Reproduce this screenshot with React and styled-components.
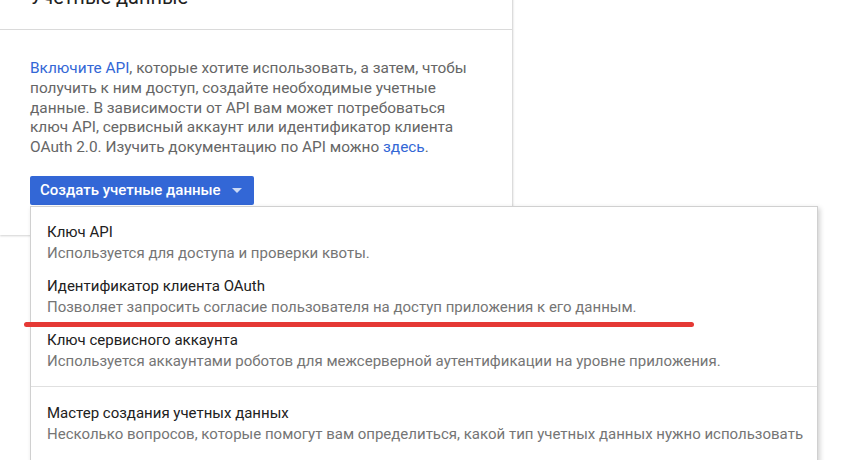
import React from "react";
import styled, { createGlobalStyle } from "styled-components";

const GlobalStyle = createGlobalStyle`
    html, body {
        margin: 0;
        padding: 0;
        background: #fff;
        overflow: hidden;
    }
    body {
        font-family: Roboto, "Liberation Sans", Arial, sans-serif;
        -webkit-font-smoothing: antialiased;
    }
`;

const Page = styled.div`
    position: relative;
    width: 848px;
    height: 460px;
    overflow: hidden;
`;

const Card = styled.section`
    width: 512px;
    margin-top: -17px;
    background: #fff;
    border-right: 1px solid #dcdcdc;
    box-shadow: 0 1px 2px rgba(0, 0, 0, 0.18);
    padding-bottom: 30px;
`;

const Header = styled.header`
    box-sizing: border-box;
    height: 47px;
    padding: 0 30px;
    border-bottom: 1px solid #dadada;

    h2 {
        margin: 0;
        font-size: 20px;
        line-height: 28px;
        font-weight: 400;
        color: #212121;
    }
`;

const Body = styled.div`
    padding: 29px 30px 0;
`;

const Text = styled.p`
    margin: 0;
    width: 450px;
    font-size: 15.4px;
    line-height: 19.8px;
    color: #666;

    a {
        color: #3367d6;
        text-decoration: none;
    }
`;

const CreateButton = styled.button`
    display: flex;
    align-items: center;
    gap: 11px;
    margin-top: 18px;
    height: 29px;
    padding: 0 12px 0 10px;
    border: none;
    border-radius: 2px;
    background: #3367d6;
    color: #fff;
    font-family: inherit;
    font-size: 15px;
    font-weight: 500;
    cursor: pointer;
`;

const Caret = styled.span`
    width: 0;
    height: 0;
    border-left: 5px solid transparent;
    border-right: 5px solid transparent;
    border-top: 5px solid rgba(255, 255, 255, 0.75);
    margin-top: 1px;
`;

const Menu = styled.div`
    position: absolute;
    left: 30px;
    top: 206px;
    width: 786px;
    height: 300px;
    background: #fff;
    border: 1px solid #d0d0d0;
    box-shadow: 2px 2px 5px rgba(0, 0, 0, 0.18);
`;

const MenuSection = styled.div`
    display: flex;
    flex-direction: column;
    gap: 13px;
    padding: ${(p) => (p.$first ? "15px 16px 15px" : "16px 16px")};
    border-top: ${(p) => (p.$first ? "none" : "1px solid #e0e0e0")};
`;

const Item = styled.div`
    cursor: pointer;
`;

const ItemTitle = styled.div`
    font-size: 15px;
    line-height: 20px;
    color: #212121;
`;

const ItemDesc = styled.div`
    margin-top: 1px;
    font-size: 15px;
    line-height: 20px;
    color: #757575;
    white-space: nowrap;
`;

const Underline = styled.div`
    position: absolute;
    left: 24px;
    top: 322px;
    width: 670px;
    height: 5px;
    border-radius: 3px;
    background: #e53935;
`;

const items = [
    {
        title: "Ключ API",
        desc: "Используется для доступа и проверки квоты.",
    },
    {
        title: "Идентификатор клиента OAuth",
        desc: "Позволяет запросить согласие пользователя на доступ приложения к его данным.",
    },
    {
        title: "Ключ сервисного аккаунта",
        desc: "Используется аккаунтами роботов для межсерверной аутентификации на уровне приложения.",
    },
];

const App = () => {
    return (
        <Page>
            <GlobalStyle />
            <Card>
                <Header>
                    <h2>Учетные данные</h2>
                </Header>
                <Body>
                    <Text>
                        <a href="#">Включите API</a>, которые хотите использовать, а затем, чтобы
                        получить к ним доступ, создайте необходимые учетные данные. В зависимости
                        от API вам может потребоваться ключ API, сервисный аккаунт или
                        идентификатор клиента OAuth 2.0. Изучить документацию по API можно{" "}
                        <a href="#">здесь</a>.
                    </Text>
                    <CreateButton>
                        Создать учетные данные
                        <Caret />
                    </CreateButton>
                </Body>
            </Card>

            {/* выпадающее меню кнопки */}
            <Menu>
                <MenuSection $first>
                    {items.map((it) => (
                        <Item key={it.title}>
                            <ItemTitle>{it.title}</ItemTitle>
                            <ItemDesc>{it.desc}</ItemDesc>
                        </Item>
                    ))}
                </MenuSection>
                <MenuSection>
                    <Item>
                        <ItemTitle>Мастер создания учетных данных</ItemTitle>
                        <ItemDesc>
                            Несколько вопросов, которые помогут вам определиться, какой тип учетных
                            данных нужно использовать
                        </ItemDesc>
                    </Item>
                </MenuSection>
            </Menu>
            <Underline />
        </Page>
    );
};

export default App;
